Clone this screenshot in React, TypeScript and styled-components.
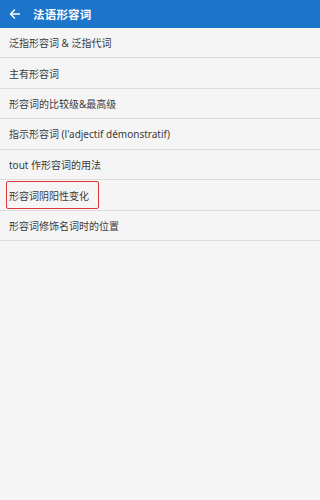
import styled, { createGlobalStyle } from "styled-components";

const GlobalStyle = createGlobalStyle`
    html, body {
        margin: 0;
        padding: 0;
        background: #f5f5f5;
    }
    body {
        font-family: "Noto Sans", "Noto Sans CJK SC", sans-serif;
    }
`;

const items = [
    "泛指形容词 & 泛指代词",
    "主有形容词",
    "形容词的比较级&最高级",
    "指示形容词 (l'adjectif démonstratif)",
    "tout 作形容词的用法",
    "形容词阴阳性变化",
    "形容词修饰名词时的位置",
];

const BackArrow = () => (
    <svg width="11" height="10" viewBox="0 0 11 10" fill="none">
        <path d="M10.5 5H1.5M5.5 1L1.5 5L5.5 9" stroke="#fff" strokeWidth="1.5" strokeLinecap="round" strokeLinejoin="round" />
    </svg>
);

export default function App() {
    return (
        <Page>
            <GlobalStyle />
            <Header>
                <BackButton>
                    <BackArrow />
                </BackButton>
                <Title>法语形容词</Title>
            </Header>
            <List>
                {items.map((item, i) => (
                    <Row key={item}>
                        {i === 5 ? <Marked>{item}</Marked> : <Label>{item}</Label>}
                    </Row>
                ))}
            </List>
        </Page>
    );
}

const Page = styled.div`
    width: 100%;
    min-height: 500px;
    background: #f5f5f5;
`;

const Header = styled.div`
    height: 28px;
    background: #1c75ca;
    display: flex;
    align-items: center;
    padding-left: 9px;
    gap: 13px;
    box-sizing: border-box;
`;

const BackButton = styled.div`
    display: flex;
    align-items: center;
    width: 11px;
`;

const Title = styled.span`
    color: #fff;
    font-size: 11.5px;
    font-weight: 700;
    font-family: "Noto Sans CJK SC", sans-serif;
    letter-spacing: 0.2px;
`;

const List = styled.div`
    display: flex;
    flex-direction: column;
`;

const Row = styled.div`
    height: 30.43px;
    box-sizing: border-box;
    border-bottom: 1px solid #dcdcdc;
    display: flex;
    align-items: center;
    padding-left: 9px;
`;

const Label = styled.span`
    font-size: 10px;
    color: #3a3a3a;
    font-family: "Noto Sans", "Noto Sans CJK SC", sans-serif;
`;

const Marked = styled(Label)`
    display: inline-flex;
    align-items: center;
    height: 28px;
    box-sizing: border-box;
    margin-left: -3px;
    margin-top: 1px;
    padding: 0 9px 0 2px;
    border: 1px solid #e0363b;
    border-radius: 2px;
`;
